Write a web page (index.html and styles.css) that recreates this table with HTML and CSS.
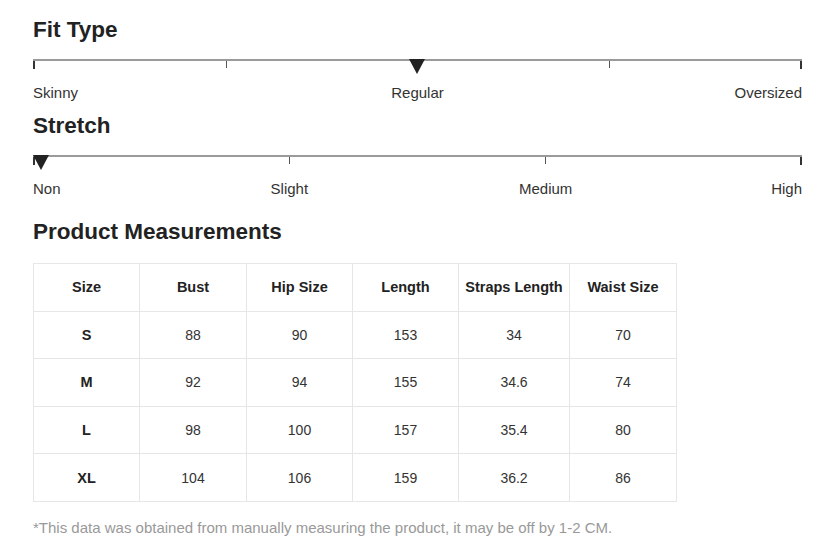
FILE: index.html
```html
<!DOCTYPE html>
<html lang="en">
<head>
<meta charset="utf-8">
<title>Size Info</title>
<link rel="stylesheet" href="styles.css">
</head>
<body>
<section class="block">
  <h2 class="title">Fit Type</h2>
  <div class="track">
    <span class="tick end"></span>
    <span class="tick"></span>
    <span class="tick"></span>
    <span class="tick"></span>
    <span class="tick end"></span>
    <span class="marker marker-mid"></span>
  </div>
  <div class="labels labels-3">
    <span class="l-left">Skinny</span>
    <span class="l-center">Regular</span>
    <span class="l-right">Oversized</span>
  </div>
</section>

<section class="block block-stretch">
  <h2 class="title">Stretch</h2>
  <div class="track">
    <span class="tick end"></span>
    <span class="tick"></span>
    <span class="tick"></span>
    <span class="tick end"></span>
    <span class="marker marker-start"></span>
  </div>
  <div class="labels labels-4">
    <span class="l-left c1">Non</span>
    <span class="l-center c2">Slight</span>
    <span class="l-center c3">Medium</span>
    <span class="l-right c4">High</span>
  </div>
</section>

<section class="block block-table">
  <h2 class="title">Product Measurements</h2>
  <table class="sizes">
    <colgroup>
      <col class="w106"><col class="w107"><col class="w106"><col class="w106"><col class="w111"><col class="w107">
    </colgroup>
    <thead>
      <tr><th>Size</th><th>Bust</th><th>Hip Size</th><th>Length</th><th>Straps Length</th><th>Waist Size</th></tr>
    </thead>
    <tbody>
      <tr><th>S</th><td>88</td><td>90</td><td>153</td><td>34</td><td>70</td></tr>
      <tr><th>M</th><td>92</td><td>94</td><td>155</td><td>34.6</td><td>74</td></tr>
      <tr><th>L</th><td>98</td><td>100</td><td>157</td><td>35.4</td><td>80</td></tr>
      <tr><th>XL</th><td>104</td><td>106</td><td>159</td><td>36.2</td><td>86</td></tr>
    </tbody>
  </table>
  <p class="note">*This data was obtained from manually measuring the product, it may be off by 1-2 CM.</p>
</section>
</body>
</html>
```
FILE: styles.css
```css
html, body {
  margin: 0;
  background: #fff;
}
body {
  padding: 17px 22px 0 33px;
  font-family: "Liberation Sans", Arial, sans-serif;
  color: #333;
}
.block {
  margin: 0;
}
.block-stretch {
  margin-top: 11px;
}
.block-table {
  margin-top: 21px;
}
.title {
  margin: 0;
  font-size: 22.5px;
  line-height: 26px;
  font-weight: bold;
  color: #222;
}
.track {
  position: relative;
  margin-top: 16px;
  height: 8px;
  border-top: 2px solid #9a9a9a;
  display: flex;
  justify-content: space-between;
  align-items: flex-start;
}
.tick {
  width: 1px;
  height: 7px;
  background: #555;
}
.tick.end {
  width: 2px;
  height: 8px;
  background: #333;
}
.marker {
  position: absolute;
  top: -2px;
  width: 0;
  height: 0;
  border-left: 8px solid transparent;
  border-right: 8px solid transparent;
  border-top: 15px solid #222;
}
.marker-mid {
  left: calc(50% - 9px);
}
.marker-start {
  left: 0;
}
.labels {
  margin-top: 15px;
  display: grid;
  font-size: 15px;
  line-height: 18px;
  color: #333;
}
.labels-3 {
  grid-template-columns: 1fr 1fr 1fr;
}
.labels-4 {
  grid-template-columns: repeat(6, 1fr);
}
.labels-4 .c1 { grid-column: 1 / 2; }
.labels-4 .c2 { grid-column: 2 / 4; }
.labels-4 .c3 { grid-column: 4 / 6; }
.labels-4 .c4 { grid-column: 6 / 7; }
.l-left { text-align: left; white-space: nowrap; }
.l-center { text-align: center; white-space: nowrap; }
.l-right { text-align: right; white-space: nowrap; }

.sizes {
  margin-top: 18px;
  border-collapse: collapse;
  table-layout: fixed;
  width: 643px;
  font-size: 14px;
}
.w106 { width: 106px; }
.w107 { width: 107px; }
.w111 { width: 111px; }
.sizes tr {
  height: 47.6px;
}
.sizes th, .sizes td {
  border: 1px solid #e6e6e6;
  text-align: center;
  vertical-align: middle;
  padding: 0;
  white-space: nowrap;
}
.sizes th {
  font-weight: bold;
  color: #222;
  font-size: 14.5px;
}
.sizes td {
  color: #333;
}
.note {
  margin: 17px 0 0;
  font-size: 15px;
  line-height: 18px;
  color: #999;
}
```
